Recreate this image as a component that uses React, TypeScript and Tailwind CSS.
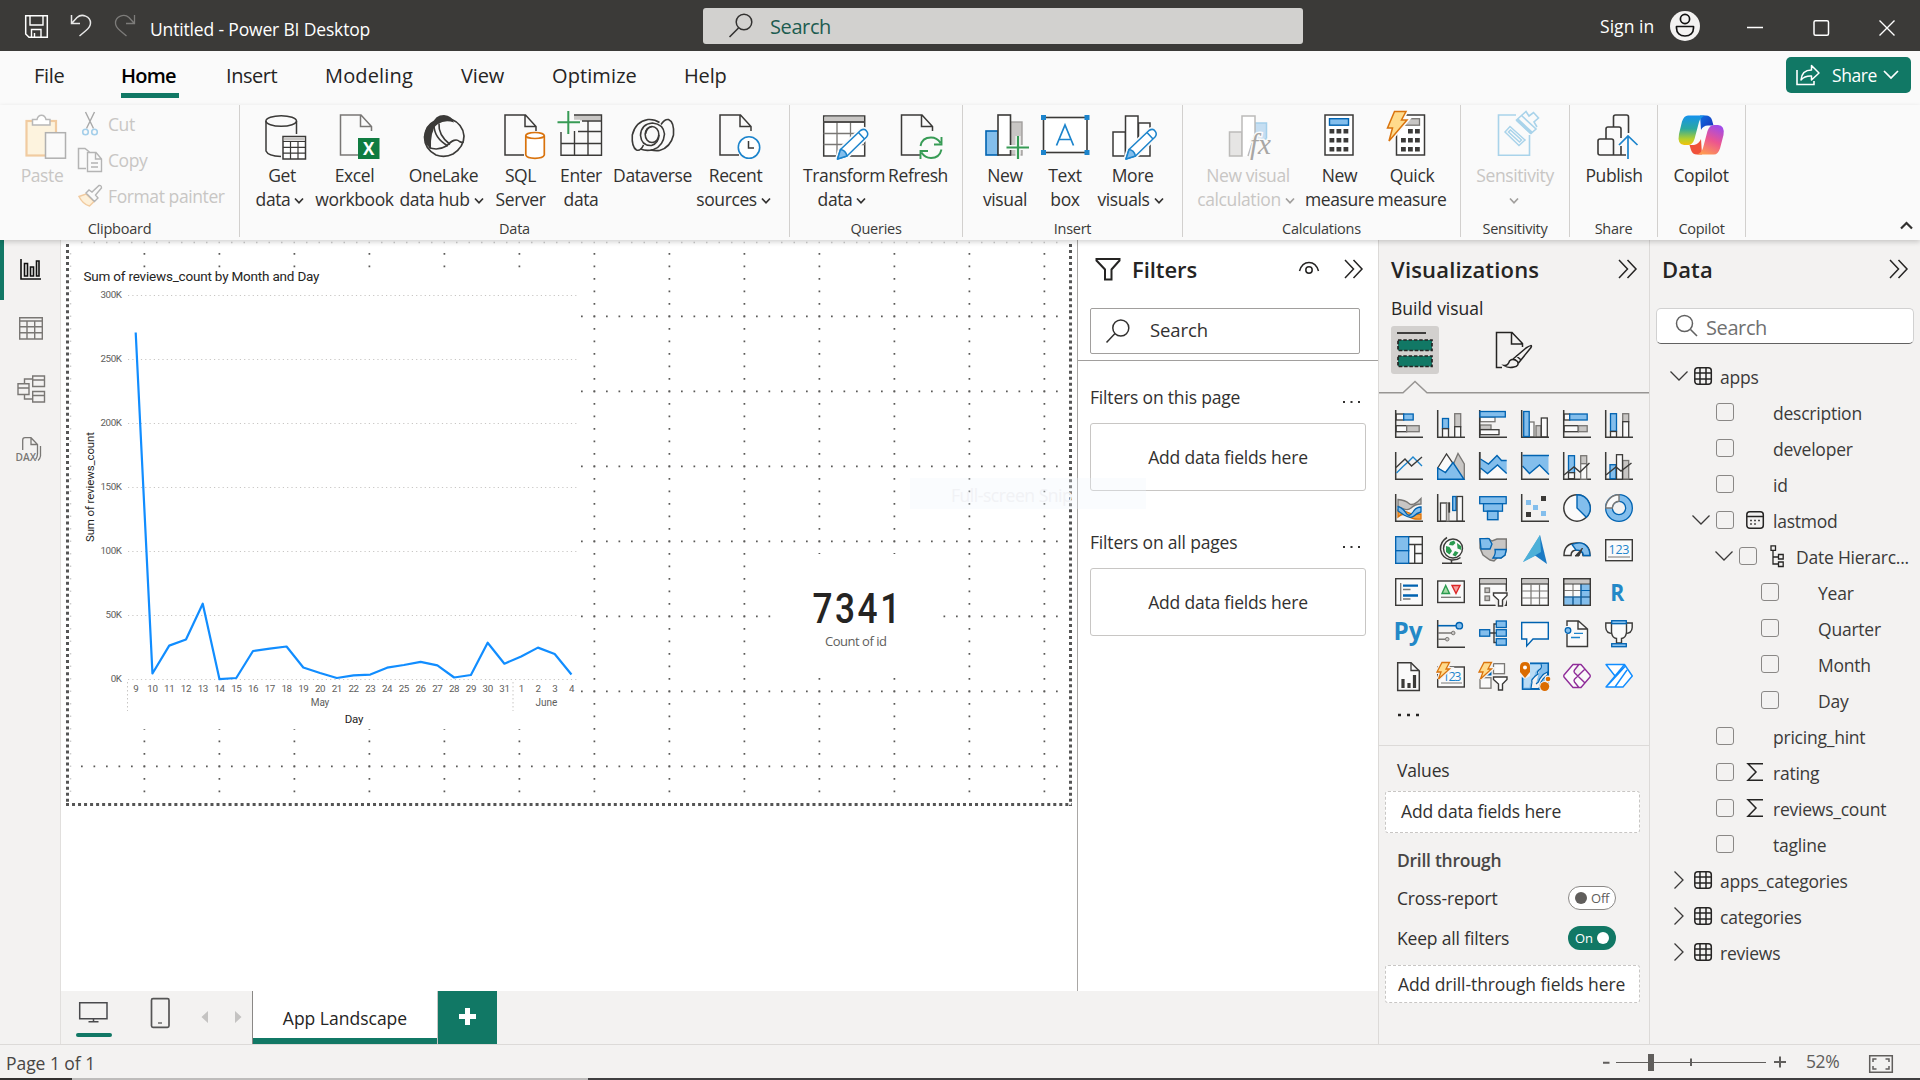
import type { ReactNode } from 'react';

const K = '#3b3a38';
const B = '#0063b1';
const L = '#83beec';
const G = '#797774';
const S = '#c8c6c4';
const W = '#fafafa';
const GREEN = '#117865';

type BoxProps = { vb: string; w: number; h: number; children: ReactNode; className?: string };

function Ic({ vb, w, h, children, className }: BoxProps) {
  return (
    <svg viewBox={vb} width={w} height={h} fill="none" className={`block shrink-0 ${className ?? ''}`}>
      {children}
    </svg>
  );
}

function Rc({ d, f, s = K, sw = 1.3 }: { d: [number, number, number, number]; f: string; s?: string; sw?: number }) {
  return <rect x={d[0]} y={d[1]} width={d[2]} height={d[3]} fill={f} stroke={s} strokeWidth={sw} />;
}

/* ---------- Title bar ---------- */

function TitleBar() {
  return (
    <header className="flex h-[51px] shrink-0 items-center bg-[#3b3a38] text-white">
      <div className="flex w-[703px] items-center pl-[24px]">
        <Ic vb="24 14 25 25" w={25} h={25} className="mt-[2px]">
          <path d="M25.7 15.7H47.3V37.3H29L25.7 34Z" stroke="#fff" strokeWidth="1.5" />
          <path d="M30 15.5V25H43V15.5M31.500 37.500V29.500H41V37.500M34.500 37V33" stroke="#fff" strokeWidth="1.400" />
        </Ic>
        <Ic vb="70 14 22 25" w={22} h={25} className="ml-[21px]">
          <path d="M71.500 16V24.500H80M72 24L77 18.500C82 14 90.500 17.500 90.500 24C90.500 27 89 29 86 31.500L79.500 37" stroke="#e8e8e8" strokeWidth="1.500" />
        </Ic>
        <Ic vb="114 14 22 25" w={22} h={25} className="ml-[22px]">
          <path d="M134.500 16V24.500H126M134 24L129 18.500C124 14 115.500 17.500 115.500 24C115.500 27 117 29 120 31.500L126.500 37" stroke="#7d7c7a" strokeWidth="1.300" />
        </Ic>
        <span className="ml-[14px] mt-[6px] text-[17.5px] leading-[24px] tracking-[-0.16px]">Untitled - Power BI Desktop</span>
      </div>
      <div className="flex h-[36px] w-[600px] items-center rounded-[3px] bg-[#d2d1cf]">
        <Ic vb="728 13 26 26" w={26} h={26} className="ml-[25px]">
          <circle cx="744" cy="22" r="7.800" stroke="#323130" strokeWidth="1.500" />
          <path d="M738.500 28L729.500 37" stroke="#323130" strokeWidth="1.600" />
        </Ic>
        <span className="ml-[16px] mt-[3px] text-[20px] leading-[26px] tracking-[-0.4px] text-[#1d5c50]">Search</span>
      </div>
      <span className="ml-[297px] w-[60px] text-[17.5px] leading-[24px] tracking-[0.05px]">Sign in</span>
      <Ic vb="1670 11 30 30" w={30} h={30} className="ml-[10px]">
        <circle cx="1685" cy="26" r="15" fill="#f3f2f1" />
        <circle cx="1685" cy="19" r="4.600" stroke="#111" strokeWidth="1.700" />
        <path d="M1676.500 26.500H1693.500V28C1693.500 33 1690 36 1685 36C1680 36 1676.500 33 1676.500 28Z" stroke="#111" strokeWidth="1.700" strokeLinejoin="round" />
      </Ic>
      <Ic vb="1740 16 160 24" w={160} h={24} className="ml-[40px] mt-[5px]">
        <path d="M1747 27.500H1763" stroke="#fff" strokeWidth="1.500" />
        <rect x="1814" y="20.700" width="14.500" height="14.500" rx="1.500" stroke="#fff" strokeWidth="1.500" />
        <path d="M1879.500 20.500L1894.500 35.500M1894.500 20.500L1879.500 35.500" stroke="#fff" strokeWidth="1.400" />
      </Ic>
    </header>
  );
}

/* ---------- Ribbon tabs ---------- */

function RibbonTabs() {
  const tab = 'text-[20px] leading-[26px] whitespace-nowrap';
  return (
    <nav className="flex h-[54px] shrink-0 items-start bg-[#fafafa] text-[#252423]">
      <div className="flex w-[1786px] pt-[12px]">
        <span className={`${tab} ml-[34px] w-[87px] tracking-[-0.3px]`}>File</span>
        <div className="mr-[47px] w-[58px]">
          <span className={`${tab} block font-semibold tracking-[-0.75px] text-black`}>Home</span>
          <div className="mt-[4px] h-[5px] bg-[#117865]" />
        </div>
        <span className={`${tab} w-[99px] tracking-[-0.45px]`}>Insert</span>
        <span className={`${tab} w-[136px] tracking-[0.15px]`}>Modeling</span>
        <span className={`${tab} w-[91px] tracking-[-0.15px]`}>View</span>
        <span className={`${tab} w-[132px] tracking-[0.1px]`}>Optimize</span>
        <span className={`${tab} tracking-[-0.15px]`}>Help</span>
      </div>
      <button className="mt-[6px] flex h-[36px] w-[125px] items-center rounded-[5px] bg-[#117865] text-white">
        <Ic vb="1795 62 28 25" w={28} h={25} className="ml-[9px]">
          <path d="M1797 69V83.500H1814V80" stroke="#fff" strokeWidth="1.600" />
          <path d="M1801 79C1801.500 72.500 1805 69 1811.500 69V64.500L1819 72L1811.500 79V75C1807 74.800 1803.500 76 1801 79Z" stroke="#fff" strokeWidth="1.500" strokeLinejoin="round" />
        </Ic>
        <span className="ml-[9px] text-[17.5px] leading-[24px] tracking-[-0.4px]">Share</span>
        <Ic vb="0 0 16 10" w={16} h={10} className="ml-[6px]">
          <path d="M1 1L8 8L15 1" stroke="#fff" strokeWidth="1.700" />
        </Ic>
      </button>
    </nav>
  );
}

/* ---------- Ribbon ---------- */

function Chev({ c = '#323130', alone }: { c?: string; alone?: boolean }) {
  return (
    <svg width="10" height="8" viewBox="0 0 10 8" fill="none" className={`mb-[1px] inline-block ${alone ? 'mr-[2px]' : 'ml-[4px] mr-[4px]'}`}>
      <path d="M1 1.500L5 5.800L9 1.500" stroke={c} strokeWidth="1.700" />
    </svg>
  );
}

type CmdProps = { w: string; l1: string; l2?: string; chev?: boolean; dim?: boolean; x: number; children: ReactNode };

function Cmd({ w, l1, l2, chev, dim, x, children }: CmdProps) {
  return (
    <div className={`flex flex-col items-center ${w} ${dim ? 'text-[#c8c6c4]' : 'text-[#323130]'}`}>
      <Ic vb={`${x - 26} 110 52 52`} w={52} h={52} className="mb-[1px]">
        {children}
      </Ic>
      <span className="whitespace-nowrap text-[17.5px] leading-[24px] tracking-[-0.38px]">{l1}</span>
      {(l2 || chev) && (
        <span className="whitespace-nowrap text-[17.5px] leading-[24px] tracking-[-0.38px]">
          {l2}
          {chev && <Chev c={dim ? '#a19f9d' : '#323130'} alone={!l2} />}
        </span>
      )}
    </div>
  );
}

function GroupLabel({ label }: { label: string }) {
  return <div className="mt-[3px] shrink-0 text-center text-[14.5px] leading-[17px] tracking-[-0.25px] text-[#3b3a39]">{label}</div>;
}

function Group({ w, label, children }: { w: string; label: string; children: ReactNode }) {
  return (
    <section className={`flex h-[132px] flex-col border-r border-[#d2d0ce] ${w}`}>
      <div className="flex h-[112px] shrink-0 justify-start pt-[5px]">{children}</div>
      <GroupLabel label={label} />
    </section>
  );
}

function Doc({ x, s = K }: { x: number; s?: string }) {
  return (
    <path d={`M${x + 19} 155H${x}V115H${x + 20.500}L${x + 31} 126.500V131M${x + 20} 115V126.500H${x + 31}`} stroke={s} strokeWidth="1.500" />
  );
}

function Pencil({ x }: { x: number }) {
  return (
    <g strokeLinejoin="round">
      <path d={`M${x} 159L${x + 3} 149.500L${x + 23} 130.500Q${x + 27} 128 ${x + 29} 131Q${x + 31.500} 134 ${x + 29} 137L${x + 9.500} 156Z`} fill="#fff" stroke="#fafafa" strokeWidth="5" />
      <path d={`M${x} 159L${x + 3} 149.500L${x + 23} 130.500Q${x + 27} 128 ${x + 29} 131Q${x + 31.500} 134 ${x + 29} 137L${x + 9.500} 156Z`} fill="#fff" stroke="#1c84cc" strokeWidth="1.500" />
      <path d={`M${x} 159L${x + 3} 149.500Q${x + 8} 150 ${x + 9.500} 156ZM${x + 21} 132.500L${x + 27} 139`} fill="#83beec" stroke="#1c84cc" strokeWidth="1.500" />
    </g>
  );
}

function CalcKeys({ x, skip }: { x: number; skip?: boolean }) {
  return (
    <g fill={K}>
      {[129, 138, 147].map((y) => [0, 7, 14].map((dx) => (skip && y === 129 && dx === 0 ? null : <rect key={`${y}${dx}`} x={x + dx} y={y} width="4.800" height="4.500" />)))}
    </g>
  );
}

function Ribbon() {
  return (
    <div className="relative z-10 flex h-[135px] shrink-0 bg-[#fafafa] shadow-[0_2px_5px_rgba(0,0,0,0.18)]">
      {/* Clipboard */}
      <section className="flex h-[132px] w-[240px] flex-col border-r border-[#d2d0ce]">
        <div className="flex h-[112px] shrink-0">
          <div className="ml-[19px] mt-[5px] flex w-[46px] flex-col items-center text-[#c8c6c4]">
            <Ic vb="16 110 52 52" w={52} h={52} className="mb-[1px]">
              <rect x="26.500" y="121" width="29.500" height="34.500" fill="#fdf3de" stroke="#f1cba0" strokeWidth="2.200" />
              <path d="M32.500 125V119.500H37Q38 115.300 41.500 115.300T46 119.500H50V125Z" fill="#fff" stroke="#b8b8b8" strokeWidth="1.500" />
              <rect x="45.500" y="132.700" width="20" height="25.500" fill="#fafafa" stroke="#b0b0b0" strokeWidth="1.500" />
            </Ic>
            <span className="text-[17.5px] leading-[24px] tracking-[-0.4px]">Paste</span>
          </div>
          <div className="ml-[12px] flex flex-col text-[17.5px] leading-[24px] tracking-[-0.4px] text-[#c8c6c4]">
            <div className="mt-[6px] flex h-[26px] items-center gap-[5px]">
              <Ic vb="77 111 26 26" w={26} h={26}>
                <path d="M85.500 112L93.500 128.500M94.500 112L86.500 128.500" stroke="#a8a8a8" strokeWidth="1.400" />
                <circle cx="85.500" cy="132" r="2.800" stroke="#a5cfea" strokeWidth="1.600" />
                <circle cx="94.500" cy="132" r="2.800" stroke="#a5cfea" strokeWidth="1.600" />
              </Ic>
              <span className="-mt-[1px]">Cut</span>
            </div>
            <div className="mt-[10px] flex h-[26px] items-center gap-[5px]">
              <Ic vb="77 146 26 26" w={26} h={26}>
                <path d="M86 167.500H78.500V147.500H85L89.500 151" stroke="#b4b4b4" strokeWidth="1.500" />
                <path d="M87.500 151.500H96L101.500 158V170.500H87.500ZM95.500 151.500V158H101.500M91 162H98M91 166H98" stroke="#b4b4b4" strokeWidth="1.400" />
              </Ic>
              <span className="-mt-[1px]">Copy</span>
            </div>
            <div className="mt-[10px] flex h-[26px] items-center gap-[5px]">
              <Ic vb="77 182 26 26" w={26} h={26}>
                <path d="M79 195.500L86 193L94 200.500L89.500 205Q83 203.500 79 195.500Z" fill="#fdf0d9" stroke="#f1cba0" strokeWidth="1.500" />
                <path d="M86 192L89 189L92 191L99 184.500Q101.500 184 101.500 187L95.500 194L98 197L94.500 200.500Z" fill="#fafafa" stroke="#b4b4b4" strokeWidth="1.400" />
              </Ic>
              <span className="-mt-[1px]">Format painter</span>
            </div>
          </div>
        </div>
        <GroupLabel label="Clipboard" />
      </section>

      <Group w="w-[550px]" label="Data">
        <Cmd w="ml-[16px] w-[52px]" l1="Get" l2="data" chev x={282}>
          <path d="M266 121V151Q268 156 281 156.500M296.500 121V134" stroke={K} strokeWidth="1.500" />
          <ellipse cx="281.200" cy="121" rx="15.300" ry="5.300" stroke={K} strokeWidth="1.500" />
          <rect x="283" y="136.500" width="22.500" height="22.500" fill="#fff" stroke={K} strokeWidth="1.500" />
          <path d="M283.700 139H304.700" stroke={S} strokeWidth="3" />
          <path d="M283 141.500H305.500M283 147.300H305.500M283 153.200H305.500M290.500 141.500V159M298 141.500V159" stroke={K} strokeWidth="1.200" />
        </Cmd>
        <Cmd w="ml-[7px] w-[79px]" l1="Excel" l2="workbook" x={355}>
          <Doc x={340.500} s="#797775" />
          <rect x="358" y="138" width="21.500" height="21" fill="#107c41" />
          <text x="368.700" y="154.800" textAnchor="middle" fontSize="17" fontWeight="700" fill="#fff" fontFamily="Open Sans">X</text>
        </Cmd>
        <Cmd w="ml-[6px] w-[87px]" l1="OneLake" l2="data hub" chev x={444}>
          <path d="M434 122Q426 127 424.500 137Q424.500 149 436 155Q445 158 453 154Q464 147 464 136Q463 124 451 119" stroke={K} strokeWidth="1.700" />
          <path d="M434 120.500Q435 127 432 134Q430.500 141 431 149Q424 144 424 136Q425 125 434 120.500Z" fill={K} />
          <path d="M432.500 124Q435 115 444 115Q452 115.500 454 122.500Q445 119.500 438 124Q435 126 433 129Z" fill={K} />
          <path d="M434 125Q434 138 448 146M439 123.500Q438 135 450 144.500M428.500 147.500Q438 151 446.500 146Q455 137 459.500 141.500Q462 143 463.500 142" stroke={K} strokeWidth="1.600" />
        </Cmd>
        <Cmd w="ml-[9px] w-[49px]" l1="SQL" l2="Server" x={521}>
          <Doc x={505} />
          <path d="M525.800 135.500V155Q527 158.300 535 158.300T544.300 155V135.500" fill="#fff" stroke="#d9730d" strokeWidth="1.700" />
          <ellipse cx="535" cy="135.500" rx="9.200" ry="3" fill="#fff" stroke="#d9730d" strokeWidth="1.700" />
        </Cmd>
        <Cmd w="ml-[16px] w-[40px]" l1="Enter" l2="data" x={581}>
          <path d="M574 118H601.500" stroke={S} strokeWidth="5" />
          <path d="M574 115H601.500V155.200H561V132M601.500 121H582M574.500 131V155M588 121V155M578 131.500H601M561 143.500H601" stroke={K} strokeWidth="1.400" />
          <path d="M568.300 111V134M557.500 122.300H580" stroke="#fafafa" strokeWidth="5" />
          <path d="M568.300 111V134M557.500 122.300H580" stroke="#379b55" strokeWidth="2" />
        </Cmd>
        <Cmd w="ml-[13px] w-[77px]" l1="Dataverse" x={652.5}>
          <g stroke={K} strokeWidth="1.600">
            <ellipse cx="651.500" cy="134.500" rx="6.800" ry="8" />
            <path d="M658.500 135Q658 143.500 651 145.500Q641 146 640 135.500Q640.500 124 652 123Q663 124 664 134Q663 146 653 149.500Q646 151.500 640 149" />
            <path d="M645 134Q646 127.500 651.500 126.500" />
            <path d="M659 122.500Q654 119 647.500 119.500Q635 121.500 631.800 135Q631 147 636 150Q640 151.500 643 145" />
            <path d="M660.500 124.500Q664 119 668 119.500Q674 122 673 135Q670 147.500 659 150.500Q655 151 650 150" />
          </g>
        </Cmd>
        <Cmd w="ml-[8px] w-[73px]" l1="Recent" l2="sources" chev x={736}>
          <Doc x={720} />
          <circle cx="749" cy="147.500" r="10.700" fill="#fff" stroke="#1c84cc" strokeWidth="1.600" />
          <path d="M748.500 141V148H754" stroke={K} strokeWidth="1.500" />
        </Cmd>
      </Group>

      <Group w="w-[173px]" label="Queries">
        <Cmd w="ml-[15px] w-[78px]" l1="Transform" l2="data" chev x={844}>
          <rect x="823.700" y="116" width="41" height="40" fill="#fff" stroke={K} strokeWidth="1.500" />
          <rect x="824.500" y="116.700" width="39.500" height="5" fill={S} />
          <path d="M823.500 122H865M837 122V156M850.500 122V156M823.500 133.500H865M823.500 144.500H865" stroke={G} strokeWidth="1.300" />
          <path d="M823.700 122H865" stroke={K} strokeWidth="1.300" />
          <Pencil x={837.5} />
        </Cmd>
        <Cmd w="ml-[6px] w-[58px]" l1="Refresh" x={918}>
          <Doc x={901.500} />
          <circle cx="931" cy="147.500" r="12.500" fill="#fafafa" />
          <path d="M920.500 146Q922 137.500 931 137.500Q937 137.500 940.500 143M941.500 137V144.500H934M941.500 149.500Q939.500 158 931 158Q925 158 921.500 152.500M920.500 159V151H928" stroke="#379b55" strokeWidth="1.900" />
        </Cmd>
      </Group>

      <Group w="w-[220px]" label="Insert">
        <Cmd w="ml-[20px] w-[44px]" l1="New" l2="visual" x={1005}>
          <Rc d={[986, 131, 12, 24]} f={L} s={B} sw={1.6} />
          <Rc d={[1010.5, 122, 11.5, 33]} f={S} s="#a19f9d" sw={1.4} />
          <Rc d={[998, 115, 12.5, 40]} f="#fff" sw={1.6} />
          <path d="M1018 136V159M1006.500 147.500H1029" stroke="#fafafa" strokeWidth="5" />
          <path d="M1018 136V159M1006.500 147.500H1029" stroke="#379b55" strokeWidth="2.200" />
        </Cmd>
        <Cmd w="ml-[15px] w-[46px]" l1="Text" l2="box" x={1065}>
          <Rc d={[1043.5, 117.5, 43.5, 35]} f="#fff" sw={1.6} />
          {[1041, 1084.5].map((x) => [115, 150].map((y) => <rect key={`${x}${y}`} x={x} y={y} width="5" height="5" fill="#1c84cc" />))}
          <path d="M1056.500 145.500L1065 125L1073.500 145.500M1059 139.500H1071" stroke="#1c84cc" strokeWidth="1.700" />
        </Cmd>
        <Cmd w="ml-[10px] w-[69px]" l1="More" l2="visuals" chev x={1132.5}>
          <Rc d={[1112.5, 132, 12.5, 24]} f="#fff" sw={1.5} />
          <Rc d={[1138, 123, 11.500, 33]} f="#fff" sw={1.5} />
          <Rc d={[1125, 116, 12.500, 40]} f="#fff" sw={1.5} />
          <Pencil x={1125.5} />
        </Cmd>
      </Group>

      <Group w="w-[278px]" label="Calculations">
        <Cmd w="ml-[13px] w-[104px]" l1="New visual" l2="calculation" chev dim x={1248}>
          <Rc d={[1229.5, 132, 12.5, 24]} f="#e6e5e4" s="#bcbbb9" sw={1.5} />
          <Rc d={[1255, 123, 11.5, 16]} f="#c5def2" s="#a5cfea" sw={1.5} />
          <path d="M1242 156V116H1255V134L1248 156" fill="#fff" stroke="#bcbbb9" strokeWidth="1.500" />
          <text x="1250" y="154" fontSize="29" fontStyle="italic" fill="#a8a6a4" stroke="#fafafa" strokeWidth="3" paintOrder="stroke" fontFamily="Liberation Serif">fx</text>
        </Cmd>
        <Cmd w="ml-[6px] w-[67px]" l1="New" l2="measure" x={1339.5}>
          <Rc d={[1324.5, 115, 28, 40]} f="#fff" sw={1.5} />
          <Rc d={[1329, 118.7, 19, 6.500]} f={L} s={B} sw={1.4} />
          <CalcKeys x={1329} />
        </Cmd>
        <Cmd w="ml-[6px] w-[66px]" l1="Quick" l2="measure" x={1413}>
          <Rc d={[1397.5, 115, 28, 40]} f="#fff" sw={1.500} />
          <Rc d={[1402, 118.7, 18.500, 6.500]} f={S} s={G} sw={1.300} />
          <CalcKeys x={1402} skip />
          <path d="M1395.500 111.500H1407L1402.500 120H1408L1390 141L1393.500 128H1388.500Z" fill="#ffd77a" stroke="#fafafa" strokeWidth="4.500" />
          <path d="M1395.500 111.500H1407L1402.500 120H1408L1390 141L1393.500 128H1388.500Z" fill="#ffdb8c" stroke="#d9730d" strokeWidth="1.500" />
        </Cmd>
      </Group>

      <Group w="w-[109px]" label="Sensitivity">
        <Cmd w="ml-[14px] w-[80px]" l1="Sensitivity" chev dim x={1515}>
          <path d="M1516 115H1498.500V155.300H1529.500V135" stroke="#a9d3ea" strokeWidth="1.600" />
          <path d="M1505 132L1510 126.500L1525 140L1519 145.500ZM1508.500 132L1510.500 130L1521.500 140L1519.500 142Z" stroke="#a9d3ea" strokeWidth="1.500" />
          <path d="M1516.500 120L1521.500 115.500L1536 129L1531 133.500ZM1521.500 115.500L1526 111.500L1529 116L1533.500 112.500L1538.500 118L1534 122L1537 127" stroke="#a9d3ea" strokeWidth="1.600" />
          <path d="M1517 119.500L1531.500 133" stroke="#a9d3ea" strokeWidth="3.500" />
        </Cmd>
      </Group>

      <Group w="w-[88px]" label="Share">
        <Cmd w="ml-[16px] w-[56px]" l1="Publish" x={1614}>
          <path d="M1626 155H1600Q1598 155 1598 153V141Q1598 139 1600 139H1611.500Q1613.500 139 1613.500 141V155M1606 139V129Q1606 127 1608 127H1619Q1621 127 1621 129V138M1613.500 127V117Q1613.500 115 1615.500 115H1626.500Q1628.500 115 1628.500 117V133M1621 146V155" stroke={K} strokeWidth="1.600" />
          <path d="M1628 159V136M1619 145L1628 136L1637.500 145" stroke="#1c84cc" strokeWidth="1.700" />
        </Cmd>
      </Group>

      <Group w="w-[88px]" label="Copilot">
        <Cmd w="ml-[14px] w-[58px]" l1="Copilot" x={1701}>
          <defs>
            <linearGradient id="cpA" x1="0" y1="0" x2="0" y2="1">
              <stop offset="0" stopColor="#1592ee" />
              <stop offset="0.450" stopColor="#2aa9a0" />
              <stop offset="0.800" stopColor="#b5cf2c" />
              <stop offset="1" stopColor="#f2c20c" />
            </linearGradient>
            <linearGradient id="cpB" x1="0.700" y1="0" x2="0.300" y2="1">
              <stop offset="0" stopColor="#a14be8" />
              <stop offset="0.500" stopColor="#ec5590" />
              <stop offset="1" stopColor="#ff9a52" />
            </linearGradient>
            <linearGradient id="cpC" x1="0" y1="0" x2="1" y2="1">
              <stop offset="0" stopColor="#0f6fe0" />
              <stop offset="1" stopColor="#1a2fb8" />
            </linearGradient>
          </defs>
          <path d="M1700 115.500H1706Q1710.500 115.500 1712 120L1713.500 125.500H1708Q1703 125.500 1701 130Z" fill="url(#cpC)" />
          <path d="M1702 154.500H1697Q1692.500 154.500 1691 150L1689.500 145H1694Q1699 144 1701 139Z" fill="#f0513a" />
          <path d="M1688 115.500H1705Q1700.500 117 1699 122L1694.500 139Q1692.500 145 1688 145H1684Q1677 144.500 1679 134L1682 121.500Q1684 115.500 1688 115.500Z" fill="url(#cpA)" />
          <path d="M1714 154.500H1697Q1701.500 153 1703 148L1707.500 131Q1709.500 125 1714 125H1718Q1725 125.500 1723.500 135L1720 148.500Q1718 154.500 1714 154.500Z" fill="url(#cpB)" />
        </Cmd>
      </Group>
      <div className="flex flex-1 items-end justify-end pb-[10px] pr-[7px]">
        <Ic vb="0 0 13 9" w={13} h={9}>
          <path d="M1 7.500L6.500 2L12 7.500" stroke="#323130" strokeWidth="2.200" />
        </Ic>
      </div>
    </div>
  );
}

/* ---------- Left rail ---------- */

function LeftRail() {
  return (
    <aside className="flex w-[61px] shrink-0 flex-col border-r border-[#e1dfdd] bg-[#f3f2f1]">
      <div className="flex h-[60px] items-center border-l-4 border-[#117865] pl-[15px]">
        <Ic vb="19 258 24 24" w={24} h={24}>
          <path d="M21 259V279H41" stroke="#111" strokeWidth="1.600" />
          <path d="M24.500 263.500H27.500V276H24.500ZM30.500 267H33.500V276H30.500ZM36.500 261H39V276H36.500Z" stroke="#111" strokeWidth="1.600" />
        </Ic>
      </div>
      <div className="flex h-[60px] items-center pl-[18px]">
        <Ic vb="18 316 26 26" w={26} h={26} className="-mt-[3px]">
          <path d="M19.700 317.700H42.300V339H19.700ZM19.700 321H42.300M19.700 326.800H42.300M19.700 332.800H42.300M27 321V339M34.700 321V339" stroke={G} strokeWidth="1.400" />
        </Ic>
      </div>
      <div className="flex h-[60px] items-center pl-[16px]">
        <Ic vb="16 374 30 30" w={30} h={30} className="-mt-[2px]">
          <path d="M32.700 376H44.500V386.500H32.700ZM32.700 380H44.500M32.700 391.500H44.500V402H32.700ZM32.700 395.500H44.500M18 383.700H29V394.500H18ZM18 388H29M24.500 383V379H32M24.500 395V399H32" stroke={G} strokeWidth="1.400" />
        </Ic>
      </div>
      <div className="flex h-[60px] items-center pl-[15px]">
        <Ic vb="15 436 28 28" w={28} h={28}>
          <path d="M22.700 450V440Q22.700 437.700 25 437.700H31L37.500 444.500V454Q37.500 457 35.500 459.500M31 438V444.500H37.500M40.500 446V456Q40 459 38 460.500" stroke={G} strokeWidth="1.300" />
          <text x="15.500" y="461" fontSize="10.500" fontWeight="600" fill={G} textLength="20.500" lengthAdjust="spacingAndGlyphs" fontFamily="Open Sans">DAX</text>
        </Ic>
      </div>
    </aside>
  );
}

/* ---------- Report canvas ---------- */

const days = ['9', '10', '11', '12', '13', '14', '15', '16', '17', '18', '19', '20', '21', '22', '23', '24', '25', '26', '27', '28', '29', '30', '31', '1', '2', '3', '4'];
const ys = [332.5, 673.5, 645.6, 639.5, 603.7, 679.2, 678, 651, 648.7, 646.5, 667.5, 673, 678, 675.4, 674.6, 667.7, 665, 661.8, 665.3, 677.5, 675, 642.7, 663.7, 656.5, 647.6, 654, 674.5];
const ticks = ['300K', '250K', '200K', '150K', '100K', '50K', '0K'];
const px = (i: number) => 135.700 + i * 16.76;

function Canvas() {
  const cols = Array.from({ length: 13 }, (_, i) => 144.400 + i * 75);
  const lines = Array.from({ length: 7 }, (_, i) => 316.300 + i * 75);
  const din = 'Roboto, sans-serif';
  return (
    <svg viewBox="61 240 1016 751" width="1016" height="751" className="block" fill="none">
      <g stroke="#5a5957" strokeWidth="1.700" strokeDasharray="1.700 10.800">
        {cols.map((x) => (
          <path key={x} d={`M${x} 253V793`} />
        ))}
        {lines.map((y) => (
          <path key={y} d={`M81 ${y}H1058`} />
        ))}
      </g>
      <path d="M81 242.500H1058M70.500 253V793" stroke="#ccc" strokeWidth="1.500" strokeDasharray="1.500 11" />
      <path d="M67.500 244V806M1070.500 244V806" stroke="#555" strokeWidth="3" strokeDasharray="3 3.030" />
      <path d="M66 804.500H1072" stroke="#555" strokeWidth="3" strokeDasharray="3 3.020" />
      <rect x="72" y="270" width="507" height="459" fill="#fff" />
      <rect x="773" y="554" width="168" height="121" fill="#fff" />

      <text x="83.500" y="281" fontSize="13.500" fontFamily={din} fill="#252423" textLength="236">Sum of reviews_count by Month and Day</text>
      {ticks.map((t, i) => (
        <g key={t}>
          <path d={`M128 ${295.500 + i * 64}H577`} stroke="#c8c6c4" strokeDasharray="1.200 3.100" />
          <text x="121.500" y={298.200 + i * 64} fontSize="9.800" textAnchor="end" fontFamily={din} fill="#605e5c" letterSpacing="-0.400">{t}</text>
        </g>
      ))}
      {days.map((t, i) => (
        <text key={i} x={px(i)} y="692" fontSize="9.800" textAnchor="middle" fontFamily={din} fill="#605e5c" letterSpacing="-0.400">{t}</text>
      ))}
      <path d="M127.500 682V711M513 682V711" stroke="#c8c6c4" strokeDasharray="1.500 2.500" />
      <text x="320" y="705.500" fontSize="10" textAnchor="middle" fontFamily={din} fill="#605e5c" letterSpacing="-0.150">May</text>
      <text x="546.500" y="705.500" fontSize="10" textAnchor="middle" fontFamily={din} fill="#605e5c">June</text>
      <text x="354" y="723" fontSize="11.500" textAnchor="middle" fontFamily={din} fill="#252423" letterSpacing="-0.300">Day</text>
      <text transform="translate(94 542) rotate(-90)" fontSize="11.500" fontFamily={din} fill="#252423" textLength="110">Sum of reviews_count</text>
      <polyline points={ys.map((y, i) => `${px(i)},${y}`).join(' ')} stroke="#118dff" strokeWidth="2.200" strokeLinejoin="round" />

      <text transform="translate(812.500 623) scale(0.840 1)" fontSize="42" fontWeight="500" fontFamily={din} fill="#252423" letterSpacing="3">7341</text>
      <text x="856" y="645.500" fontSize="13" textAnchor="middle" fontFamily="Open Sans" fill="#605e5c" textLength="62">Count of id</text>
    </svg>
  );
}

function PageTabs() {
  return (
    <div className="flex h-[53px] shrink-0 bg-[#f3f2f1]">
      <Ic vb="61 991 191 53" w={191} h={53}>
        <path d="M79.700 1002.700H107V1018.700H79.700ZM93.500 1019V1021.500M88.500 1021.700H98.500" stroke="#4a4a4d" strokeWidth="1.500" />
        <rect x="76" y="1033" width="36" height="4" rx="2" fill={GREEN} />
        <rect x="151.500" y="998.700" width="17.500" height="28.600" rx="1.500" stroke="#555" strokeWidth="1.700" />
        <path d="M158 1023H162" stroke="#555" strokeWidth="1.300" />
        <path d="M208 1011V1023L201.500 1017ZM235 1011V1023L241.500 1017Z" fill="#c4c3c2" />
      </Ic>
      <div className="flex w-[186px] flex-col border-x border-l-[#8a8886] border-r-[#c8c6c4] bg-white">
        <div className="flex h-[47px] items-center justify-center pt-[7px] text-[17.5px] font-medium leading-[24px] tracking-[0px] text-[#252423]">App Landscape</div>
        <div className="h-[6px] bg-[#117865]" />
      </div>
      <div className="flex w-[59px] items-center justify-center bg-[#117865] pb-[3px]">
        <Ic vb="0 0 17 17" w={17} h={17}>
          <path d="M8.500 0V17M0 8.500H17" stroke="#fff" strokeWidth="5" />
        </Ic>
      </div>
    </div>
  );
}

/* ---------- Filters ---------- */

function DoubleChevron({ className }: { className?: string }) {
  return (
    <Ic vb="0 0 20 20" w={20} h={20} className={className}>
      <path d="M1 1L9.500 10L1 19M9.500 1L18 10L9.500 19" stroke="#252423" strokeWidth="1.500" />
    </Ic>
  );
}

function FilterBlock({ title }: { title: string }) {
  return (
    <div className="h-[145px]">
      <div className="flex h-[36px] items-center justify-between pl-[12px] pr-[18px]">
        <span className="-mt-[2px] text-[17.5px] leading-[24px] tracking-[-0.18px] text-[#323130]">{title}</span>
        <Ic vb="0 0 17 4" w={17} h={4} className="mt-[8px]">
          <path d="M0 2H2M7.500 2H9.500M15 2H17" stroke="#323130" strokeWidth="2" />
        </Ic>
      </div>
      <div className="ml-[12px] mt-[7px] flex h-[68px] w-[276px] items-center justify-center rounded-[3px] border border-[#c8c6c4] text-[17.500px] leading-[24px] tracking-[-0.2px] text-[#323130]">Add data fields here</div>
    </div>
  );
}

function Filters() {
  return (
    <section className="h-[751px] w-[301px] shrink-0 border-l border-[#a9a7a5] bg-white">
      <div className="flex h-[68px] items-center">
        <Ic vb="1095 256 26 26" w={26} h={26} className="-mt-[11px] ml-[17px]">
          <path d="M1096.500 259H1119.500V260.500L1111.500 269.500V279.500H1105V269.500L1096.500 260.500Z" stroke="#252423" strokeWidth="2" />
        </Ic>
        <span className="-mt-[11px] ml-[11px] w-[166px] text-[22px] font-semibold leading-[28px] tracking-[-0.05px] text-[#252423]">Filters</span>
        <Ic vb="1298 258 22 18" w={22} h={18} className="-mt-[14px]">
          <path d="M1299.500 271Q1302 262.500 1309 262.500T1318.500 271" stroke="#252423" strokeWidth="1.500" />
          <circle cx="1309" cy="270" r="3.200" stroke="#252423" strokeWidth="1.500" />
        </Ic>
        <DoubleChevron className="-mt-[10px] ml-[24px]" />
      </div>
      <div className="ml-[12px] flex h-[46px] w-[270px] items-center rounded-[2px] border border-[#a19f9d]">
        <Ic vb="1105 317 26 26" w={26} h={26} className="ml-[14px]">
          <circle cx="1120.800" cy="327" r="8" stroke="#323130" strokeWidth="1.500" />
          <path d="M1115 332.500L1106.500 341.500" stroke="#323130" strokeWidth="1.500" />
        </Ic>
        <span className="-mt-[3px] ml-[19px] text-[18.500px] leading-[24px] tracking-[-0.1px] text-[#323130]">Search</span>
      </div>
      <div className="mb-[19px] mt-[6px] h-px bg-[#a19f9d]" />
      <FilterBlock title="Filters on this page" />
      <FilterBlock title="Filters on all pages" />
    </section>
  );
}

/* ---------- Visualizations ---------- */

const axis = <path d="M.7 0V27.300H28" stroke={K} strokeWidth="1.500" />;
const bolt = (
  <>
    <path d="M5 .5H12.500L9 7H12.500L1.500 17L4 10H0Z" fill="#ffdb8c" stroke="#f3f2f1" strokeWidth="4" />
    <path d="M5 .5H12.500L9 7H12.500L1.500 17L4 10H0Z" fill="#ffdb8c" stroke="#d9730d" strokeWidth="1.300" />
  </>
);
const funnel = <path d="M14.500 15H28V17.500L23.500 22V28H19.500V22L14.500 17.500Z" fill="#fff" stroke={K} strokeWidth="1.400" />;

const visuals: ReactNode[] = [
  <>{axis}<Rc d={[1.2, 4, 7.500, 6]} f={W} /><Rc d={[8.700, 4, 9.500, 6]} f={L} s={B} /><Rc d={[1.200, 15.700, 10.500, 6]} f={W} /><Rc d={[11.700, 15.700, 12.500, 6]} f={S} s={G} /></>,
  <>{axis}<Rc d={[5.500, 8.500, 6, 10]} f={L} s={B} /><Rc d={[5.500, 18.700, 6, 8.500]} f={W} /><Rc d={[17.700, 3.700, 6, 13]} f={S} s={G} /><Rc d={[17.700, 16.700, 6, 10.500]} f={W} /></>,
  <><Rc d={[1, 7, 15, 4.700]} f={W} s={G} /><Rc d={[1, 15, 11, 4.500]} f={S} s={G} /><Rc d={[1, 19.700, 19, 5]} f={W} />{axis}<Rc d={[1, 1.500, 25.300, 5.500]} f={L} s={B} /></>,
  <><Rc d={[8, 12, 5, 15]} f={W} s={G} /><Rc d={[15, 15.700, 5, 11.500]} f={S} s={G} /><Rc d={[20.300, 8, 6, 19]} f={W} />{axis}<Rc d={[2.700, 1.500, 5.500, 25]} f={L} s={B} /></>,
  <>{axis}<Rc d={[1.200, 4, 5.500, 6]} f={W} /><Rc d={[6.700, 4, 17.500, 6]} f={L} s={B} /><Rc d={[1.200, 15.700, 14, 6]} f={W} /><Rc d={[15.500, 15.700, 8.700, 6]} f={S} s={G} /></>,
  <>{axis}<Rc d={[5.500, 3.700, 6, 17.500]} f={L} s={B} /><Rc d={[5.500, 21.500, 6, 5.500]} f={W} /><Rc d={[17.700, 3.700, 6, 8]} f={S} s={G} /><Rc d={[17.700, 11.700, 6, 15.500]} f={W} /></>,

  <>{axis}<path d="M1.500 21L8 14.500L13 10L18 5L27 14" stroke="#1c84cc" strokeWidth="1.400" /><path d="M1 15.500L10 7L16.500 14L27 5" stroke={K} strokeWidth="1.400" /></>,
  <><path d="M13 20L21 1.500L27.300 12V27H13Z" fill={S} stroke={G} strokeWidth="1.300" /><path d="M.7 16L9.500 2L17 13L8 21Z" fill={W} stroke={K} strokeWidth="1.300" /><path d="M.7 16L8.500 20.500L16 10.500L27 27.300H.7Z" fill={L} stroke={B} strokeWidth="1.400" /></>,
  <>{axis}<path d="M1.500 21L8 22L18 13L27.500 22V27H1.500Z" fill={W} /><path d="M1.500 7L9.500 12L18 3.500L22.500 8.500H27.700V21.500L18.500 13L8.500 21.500L1.500 16" fill={L} /><path d="M1.500 7L9.500 12L18 3.500L22.500 8.500H27.700M27.700 21.500L18.500 13L8.500 21.500L1.500 16" stroke={B} strokeWidth="1.400" />{axis}</>,
  <><path d="M1.500 3.500H27.500V22L18.500 13L8.500 21.500L1.500 14Z" fill={L} /><path d="M1.500 3.500H28M28 22.500L18.500 13L8.500 21.500L1.500 14" stroke={B} strokeWidth="1.400" />{axis}</>,
  <>{axis}<Rc d={[5.500, 3.700, 6, 17]} f={L} s={B} /><Rc d={[5.500, 20.700, 6, 6]} f={W} /><Rc d={[17.700, 3.700, 6, 8]} f={S} s={G} /><Rc d={[17.700, 11.700, 6, 15.500]} f={W} s={G} /><path d="M1 23L11 15L17 20L26.500 11" stroke={K} strokeWidth="1.400" /></>,
  <>{axis}<Rc d={[5, 12.700, 6, 14]} f={L} s={B} /><Rc d={[17.700, 8.500, 6, 18.500]} f={S} s={G} /><Rc d={[11.500, 2.700, 6, 24.500]} f={W} /><path d="M1 23L11 15L16 19L26.500 11" stroke={K} strokeWidth="1.400" /></>,

  <><path d="M3 16Q9 16 13 18.500T26 20V25Q18 26 13 22T3 23Z" fill="#f7a13f" stroke="#d9730d" strokeWidth="1.300" /><path d="M3 5.500Q10 6 14 9.500T26 4.500V10Q20 10 16 14T3 12Z" fill={S} stroke={G} strokeWidth="1.300" /><path d="M3 12.500Q8 14 11 19T18 18Q21 13 26 13V18Q22 19 19 22T9 21L3 17Z" fill={L} stroke={B} strokeWidth="1.300" />{axis}</>,
  <>{axis}<Rc d={[3.500, 9, 6, 18]} f={W} /><Rc d={[9.500, 9, 2.500, 18]} f={S} s={G} sw={1} /><Rc d={[12, 9, 0.500, 9]} f={K} /><Rc d={[15.700, 2.500, 3.300, 14]} f={L} s={B} /><Rc d={[20, 2.500, 5.500, 24.500]} f={W} /></>,
  <><Rc d={[.7, 2.700, 26.500, 7]} f={L} s={B} /><Rc d={[4.500, 9.700, 19, 7.500]} f={L} s={B} /><Rc d={[8.500, 17.200, 10.500, 8.500]} f={L} s={B} sw={1.400} /></>,
  <>{axis}<g><rect x="5" y="6" width="5" height="5" fill={L} /><rect x="12" y="11" width="5" height="5" fill={L} /><rect x="20" y="2" width="5" height="5" fill={K} /><rect x="20" y="17" width="5" height="5" fill={L} /><rect x="5" y="18" width="5" height="5" fill={K} /></g></>,
  <><circle cx="14" cy="14" r="13.200" fill={W} stroke={K} strokeWidth="1.500" /><path d="M14 .8A13.200 13.200 0 0 1 23.300 23.300L14 14Z" fill={L} stroke={B} strokeWidth="1.400" /></>,
  <><circle cx="14" cy="14" r="10" stroke={B} strokeWidth="8" /><circle cx="14" cy="14" r="10" stroke={L} strokeWidth="5.400" /><path d="M.8 14A13.200 13.200 0 0 1 14 .8V7.300A6.700 6.700 0 0 0 7.300 14Z" fill={W} stroke={G} strokeWidth="1.400" /></>,

  <><Rc d={[.7, .7, 26.600, 26.600]} f={W} sw={1.400} /><Rc d={[.7, .7, 13, 14]} f={L} s={B} /><Rc d={[.7, 14.700, 13, 12.600]} f={L} s={B} /><path d="M14 8.500H27M19.700 8.500V27M19.700 17.500H27" stroke={K} strokeWidth="1.400" /></>,
  <><circle cx="16" cy="12.500" r="9.500" fill={W} stroke={K} strokeWidth="1.400" /><path d="M13 6L17 4.500L18.500 7L16 9.500L12 9ZM9 10L12.500 11L15 15L12.500 18.500L9 16ZM20 7L24 10L24.500 14L20.500 12.500ZM18 15L21.500 16.500L18.500 20.500L15.500 19Z" fill="#2b9b50" /><path d="M10 1.500Q3 6 3.500 13.500Q5 22.500 14 24Q20 24.500 23.500 21.500M14.500 24.500V27.300M5 27.300H25" stroke={K} strokeWidth="1.500" /></>,
  <><path d="M1 3L9 2.500L13 5L18 3H27.300V14L26 19L22 22L19 21L15 25L11 24L4 19L1 12Z" fill={S} stroke={G} strokeWidth="1.400" /><path d="M1 2.700H10L13 8L11 13H2Z" fill={L} stroke={B} strokeWidth="1.300" /><path d="M16 13.500H27.300L26 19L22 22H14Q17 18 16 13.500Z" fill={L} stroke={B} strokeWidth="1.300" /></>,
  <><path d="M19 -1L2 26L16 19Z" fill="#57a9d9" /><path d="M19 -1L26 28L14 19.500Z" fill="#1b7ac4" /><path d="M19 -1L2 26L14 19.500L20 16Z" fill="#4db0d8" /></>,
  <><path d="M1 19.500Q1 7 14 7T27 19.500H20Q20 14 14 14T8 19.500Z" fill={W} stroke={K} strokeWidth="1.500" /><path d="M9 8.500Q20 4 25 12Q27 15 27 19.500H20.500Q20 14 13 14Z" fill={L} stroke={B} strokeWidth="1.300" /><path d="M12 20L19.500 12L16 20Z" fill={K} stroke={K} /></>,
  <><Rc d={[.7, 3.700, 26.600, 21]} f={W} sw={1.400} /><text x="14" y="18" textAnchor="middle" fontSize="12.500" fill="#1c84cc" textLength="21" fontFamily="Open Sans">123</text><path d="M3 21H25" stroke={G} /></>,

  <><Rc d={[.7, .7, 26.600, 26.600]} f={W} sw={1.400} /><path d="M5.700 5V23" stroke={G} strokeWidth="1.300" /><path d="M8 7.700H23M8 17.500H23" stroke={B} strokeWidth="2.300" /><path d="M8 11.500H15.500M8 21H15.500" stroke={G} strokeWidth="1.300" /></>,
  <><Rc d={[.7, 3, 26.600, 21.500]} f={W} sw={1.400} /><path d="M8.700 7.500L12.500 15.500H5Z" fill="#a5dba5" stroke="#2b9b50" strokeWidth="1.400" /><path d="M19 15.500L15 7.500H23Z" fill="#f5a0a0" stroke="#dc2626" strokeWidth="1.400" /><path d="M4 19.300H24" stroke={G} strokeWidth="1.300" /></>,
  <><Rc d={[.7, .7, 26.600, 26.600]} f={W} sw={1.400} /><rect x="1.400" y="1.400" width="25.200" height="4.400" fill={S} /><path d="M.7 6H27.300" stroke={K} strokeWidth="1.200" /><Rc d={[6, 10, 4.500, 4.500]} f={S} s={G} /><Rc d={[6, 18, 4.500, 4.500]} f={S} s={G} /><path d="M13 13.500H29V19L25 29H17Z" fill="#f3f2f1" />{funnel}</>,
  <><Rc d={[.7, .7, 26.600, 26.600]} f={W} sw={1.400} /><rect x="1.400" y="1.400" width="25.200" height="4.400" fill={S} /><path d="M.7 6H27.300" stroke={K} strokeWidth="1.200" /><path d="M10 6V27M18.500 6V27M1 13H27M1 20H27" stroke={G} strokeWidth="1.200" /></>,
  <><Rc d={[.7, .7, 26.600, 26.600]} f={W} sw={1.400} /><rect x="1.400" y="1.400" width="25.200" height="4.400" fill={S} /><path d="M18 6H27V27H1V19H18Z" fill={L} /><path d="M10 6V27M18 6V27M1 12.500H27M1 19H27" stroke={G} strokeWidth="1.100" /><path d="M18 6V27M10 19V27M1 19H27M18 12.500H27" stroke={B} strokeWidth="1.200" /><Rc d={[.7, .7, 26.600, 26.600]} f="none" sw={1.400} /><path d="M.7 6H27.300" stroke={K} /></>,
  <text x="12.200" y="22.500" textAnchor="middle" fontSize="24" fontWeight="700" fill="#2388c7" fontFamily="Open Sans" textLength="14" lengthAdjust="spacingAndGlyphs">R</text>,

  <text x="-1.500" y="19.500" fontSize="24.500" fontWeight="700" fill="#2388c7" fontFamily="Open Sans" textLength="29" lengthAdjust="spacingAndGlyphs">Py</text>,
  <>{axis}<path d="M1 5.700H19" stroke={B} strokeWidth="1.600" /><circle cx="22.300" cy="5.700" r="3.200" fill={L} stroke={B} strokeWidth="1.400" /><path d="M1 13H14.500M1 19.200H8" stroke={G} strokeWidth="1.400" /><circle cx="16.200" cy="13" r="1.800" fill={S} stroke={G} /><circle cx="10.200" cy="19.200" r="1.800" fill={S} stroke={G} /></>,
  <><path d="M10 13H18M17.500 4H15V22.500H17.500" stroke={K} strokeWidth="1.400" /><Rc d={[.7, 9.700, 10, 6.500]} f={L} s={B} /><Rc d={[17.300, 1, 10, 6.500]} f={L} s={B} /><Rc d={[17.300, 9.700, 10, 6.500]} f={L} s={B} /><Rc d={[17.300, 18.700, 10, 6.500]} f={L} s={B} /></>,
  <path d="M.7 2.500H27.300V19H12L5.700 26V19H.7Z" fill={W} stroke={B} strokeWidth="1.400" />,
  <><path d="M4 .7H15.500L24.500 9V26.500H4Z" fill={W} /><path d="M4 6V1H15.500L24.500 9V26.500H4V14M15 1V9H24.500" stroke={K} strokeWidth="1.400" /><circle cx="5" cy="10.500" r="2.800" fill={L} stroke={B} strokeWidth="1.300" /><path d="M11 13.300H20M8 17.500H17" stroke="#1c84cc" strokeWidth="1.300" /></>,
  <><path d="M6.500 3H.8V7.500Q1 13.500 8 13.500M21.500 3H27.200V7.500Q27 13.500 20 13.500" fill={W} stroke={K} strokeWidth="1.400" /><path d="M6.500 3H21.500V12Q21 18 16.500 18.500V23H11.500V18.500Q7 18 6.500 12Z" fill={W} stroke={K} strokeWidth="1.400" /><Rc d={[6.700, .7, 14.600, 3]} f={L} s={B} /><Rc d={[6.700, 23.700, 14.600, 3]} f={L} s={B} /></>,

  <><path d="M2.700 .7H16L24.300 9V28.500H2.700Z" fill={W} stroke={K} strokeWidth="1.500" /><path d="M16 .7V8.500H24.300" stroke={K} strokeWidth="1.300" /><path d="M8 17V26M14 21V26M19.500 13V26" stroke={K} strokeWidth="3.200" /></>,
  <><Rc d={[.7, 5, 26.600, 20]} f={W} sw={1.400} /><text x="15" y="19" textAnchor="middle" fontSize="12.500" fill="#1c84cc" textLength="19" fontFamily="Open Sans">123</text><path d="M4 21H25" stroke={G} />{bolt}</>,
  <><Rc d={[14.500, 1.700, 11, 10]} f={W} s={G} /><Rc d={[1, 15.700, 11, 10.500]} f={W} s={G} /><path d="M12.500 8V13.500H7Z" fill={B} />{bolt}<path d="M13 14H29V19L25 29H17Z" fill="#f3f2f1" />{funnel}</>,
  <><Rc d={[1.500, 1.200, 25.800, 26]} f={L} s={B} sw={1.500} /><path d="M3 25.500V18L9 13V3H19Q21 5 18 7Q14 9 14 12Q13 15 11 16Q9 18 10 20Q8 22 8.500 25.500Z" fill="#b9dcf5" /><path d="M20 2Q21.500 6 18 8Q15.500 10 17 12Q14 14 12.500 16Q10 18 11 20.500Q10.500 23 10 26.500H18L20 20L22 17Q24 15 26.500 13V10Q22 12 21 14Q18 17 17.500 20L15 22" fill="#f3f2f1" stroke={B} strokeWidth="1.100" /><path d="M-1 0H9V14L4 17L-1 14Z" fill="#f3f2f1" /><path d="M-1 5Q-1 0 4 0T9 5V10L4 16L-1 10Z" fill="#db6c00" /><circle cx="4" cy="5.500" r="2" fill="#fff" /><circle cx="23.700" cy="24.500" r="5.600" fill="#f3f2f1" /><circle cx="23.700" cy="24.500" r="4.500" fill="#db6c00" /><circle cx="27" cy="17" r="3.400" fill="#f3f2f1" /><circle cx="27" cy="17" r="2.300" fill="#db6c00" /></>,
  <path d="M10 2.500H18L27 13Q27.600 14 27 15L18 25.500H10L1 15Q.4 14 1 13ZM15.500 3L11.500 8Q10.500 9.500 11.500 10.700L22 21M15.500 25L11.500 20Q10.500 18.500 11.500 17.300L22 7" stroke="#8f2c99" strokeWidth="1.400" strokeLinejoin="round" fill={W} />,
  <path d="M1 2.500H19.500L27.300 14L18 25H1L10 14ZM10 14L19.500 2.500M10 25L22 8M3 23L20 4.500" stroke="#118dff" strokeWidth="1.400" strokeLinejoin="round" fill="#fff" />,
];

const label = 'text-[17.5px] leading-[24px] tracking-[-0.17px] text-[#323130] whitespace-nowrap';

function Visualizations() {
  return (
    <section className="flex w-[271px] shrink-0 flex-col border-l border-[#dcdad8] bg-[#f3f2f1]">
      <div className="flex h-[57px] items-center justify-between pl-[12px] pr-[11px]">
        <h2 className="text-[22px] font-semibold leading-[28px] tracking-[0.17px] text-[#252423]">Visualizations</h2>
        <DoubleChevron />
      </div>
      <div className="-mt-[1px] ml-[12px] text-[17.5px] font-medium leading-[24px] tracking-[0px] text-[#252423]">Build visual</div>
      <div className="mt-[6px] flex pl-[12px]">
        <div className="flex size-[48px] items-center justify-center rounded-[3px] bg-[#d2d0ce]">
          <Ic vb="1391 326 48 48" w={48} h={48}>
            <path d="M1397 333H1426" stroke="#252423" strokeWidth="1.700" />
            <rect x="1398" y="340" width="34" height="10.500" fill={GREEN} stroke="#252423" strokeWidth="1.700" strokeDasharray="3.500 1.800" />
            <rect x="1398" y="356" width="34" height="10.500" fill={GREEN} stroke="#252423" strokeWidth="1.700" strokeDasharray="3.500 1.800" />
          </Ic>
        </div>
        <Ic vb="1494 326 40 48" w={40} h={48} className="ml-[55px]">
          <path d="M1502 367.500H1496.500V332.500H1512L1522.500 343.500V347M1511.500 333V344H1522" stroke="#252423" strokeWidth="1.500" />
          <path d="M1504 365.500Q1508 366 1509.500 361Q1513 357.500 1517.500 361.500Q1519.500 366 1514 367Q1508 368.500 1504 365.500ZM1513 359L1526 348Q1533 343.500 1531 347.500L1518.500 363M1516 355.500L1520.500 359.500" stroke="#252423" strokeWidth="1.500" />
        </Ic>
      </div>
      <Ic vb="1379 374 270 21" w={270} h={21}>
        <path d="M1379 392.700H1403L1415 381.500L1427 392.700H1649" stroke="#979593" strokeWidth="1.500" />
      </Ic>
      <div className="ml-[16px] mt-[15px] grid w-[252px] grid-cols-6 gap-y-[14px]">
        {visuals.map((v, i) => (
          <svg key={i} width="28" height="28" viewBox="0 0 28 28" fill="none" className="block overflow-visible">
            {v}
          </svg>
        ))}
      </div>
      <Ic vb="0 0 22 4" w={22} h={4} className="ml-[19px] mt-[23px]">
        <path d="M0 2H3M9 2H12M18 2H21" stroke="#252423" strokeWidth="2.600" />
      </Ic>
      <div className="mt-[28px] h-px bg-[#dcdad8]" />
      <div className={`${label} ml-[18px] mt-[12px]`}>Values</div>
      <div className={`${label} ml-[6px] mt-[9px] flex h-[42px] w-[255px] items-center rounded-[3px] border border-dashed border-[#c8c6c4] bg-white pb-[3px] pl-[15px]`}>Add data fields here</div>
      <div className="ml-[18px] mt-[15px] text-[17.5px] font-semibold leading-[24px] tracking-[-0.27px] text-[#484644]">Drill through</div>
      <div className="ml-[18px] mt-[14px] flex h-[24px] w-[219px] items-center justify-between">
        <span className={label}>Cross-report</span>
        <span className="flex h-[24px] w-[48px] items-center rounded-full border border-[#8a8886] bg-white pl-[6px] text-[13px] tracking-[-0.2px] text-[#605e5c]">
          <i className="mr-[4px] block size-[12px] rounded-full bg-[#605e5c]" />
          <span className="mt-[2px]">Off</span>
        </span>
      </div>
      <div className="ml-[18px] mt-[16px] flex h-[24px] w-[219px] items-center justify-between">
        <span className={label}>Keep all filters</span>
        <span className="flex h-[24px] w-[48px] items-center justify-between rounded-full bg-[#117865] px-[7px] text-[13px] tracking-[-0.2px] text-white">
          <span className="mt-[2px]">On</span>
          <i className="block size-[12px] rounded-full bg-white" />
        </span>
      </div>
      <div className="ml-[6px] mt-[15px] flex h-[38px] w-[255px] items-center whitespace-nowrap rounded-[3px] border border-dashed border-[#c8c6c4] bg-white pl-[12px] text-[17.5px] leading-[24px] tracking-[-0.08px] text-[#323130]">Add drill-through fields here</div>
    </section>
  );
}

/* ---------- Data pane ---------- */

type Row = { t: string; depth: number; open?: boolean; closed?: boolean; icon?: 'table' | 'cal' | 'tree' | 'sum'; box?: boolean };

const rows: Row[] = [
  { t: 'apps', depth: 0, open: true, icon: 'table' },
  { t: 'description', depth: 1, box: true },
  { t: 'developer', depth: 1, box: true },
  { t: 'id', depth: 1, box: true },
  { t: 'lastmod', depth: 1, box: true, open: true, icon: 'cal' },
  { t: 'Date Hierarc...', depth: 2, box: true, open: true, icon: 'tree' },
  { t: 'Year', depth: 3, box: true },
  { t: 'Quarter', depth: 3, box: true },
  { t: 'Month', depth: 3, box: true },
  { t: 'Day', depth: 3, box: true },
  { t: 'pricing_hint', depth: 1, box: true },
  { t: 'rating', depth: 1, box: true, icon: 'sum' },
  { t: 'reviews_count', depth: 1, box: true, icon: 'sum' },
  { t: 'tagline', depth: 1, box: true },
  { t: 'apps_categories', depth: 0, closed: true, icon: 'table' },
  { t: 'categories', depth: 0, closed: true, icon: 'table' },
  { t: 'reviews', depth: 0, closed: true, icon: 'table' },
];

const indent = ['pl-[19px]', 'pl-[41px]', 'pl-[64px]', 'pl-[86px]'];

function RowIcon({ icon }: { icon: Row['icon'] }) {
  return (
    <svg width="20" height="24" viewBox="0 0 20 24" fill="none" className="block shrink-0" stroke="#252423" strokeWidth="1.500">
      {icon === 'table' && (
        <>
          <rect x="1.800" y="3.800" width="16.500" height="16.500" rx="3" />
          <path d="M7 4V20M13 4V20M2 9H18M2 15H18" />
        </>
      )}
      {icon === 'cal' && (
        <>
          <rect x="1.800" y="3.800" width="16.500" height="16.500" rx="3" />
          <path d="M2 8.500H18" />
          <path d="M9.200 12.500H10.800M13.200 12.500H14.800M5.200 16H6.800M5.200 12.500H6.800M9.200 16H10.800" strokeWidth="1.700" />
        </>
      )}
      {icon === 'tree' && <path d="M3 1.800H7.500V6.300H3ZM5 6.500V20H10.500M5 13H10.500M10.500 10.500H15.200V15H10.500ZM10.500 18H15.200V22.500H10.500Z" strokeWidth="1.300" />}
      {icon === 'sum' && <path d="M18 3.800H3L11 12L3 20.200H18" />}
    </svg>
  );
}

function DataPane() {
  return (
    <section className="w-[271px] shrink-0 border-l border-[#dcdad8] bg-[#f3f2f1]">
      <div className="flex h-[57px] items-center justify-between pl-[12px] pr-[11px]">
        <h2 className="text-[22px] font-semibold leading-[28px] tracking-[0.1px] text-[#252423]">Data</h2>
        <DoubleChevron />
      </div>
      <div className="ml-[6px] mt-[11px] flex h-[36px] w-[258px] items-center rounded-[5px] border border-b-[1.5px] border-[#d1d1d1] border-b-[#616161] bg-white">
        <Ic vb="0 0 23 23" w={23} h={23} className="-mt-[1px] ml-[18px]">
          <circle cx="9.500" cy="9.500" r="8" stroke="#616161" strokeWidth="1.500" />
          <path d="M15.500 15.500L22 22" stroke="#616161" strokeWidth="1.600" />
        </Ic>
        <span className="ml-[8px] mt-[4px] text-[20px] leading-[26px] tracking-[-0.4px] text-[#707070]">Search</span>
      </div>
      <div className="mt-[14px]">
        {rows.map((r) => (
          <div key={r.t} className={`flex h-[36px] items-center ${indent[r.depth]}`}>
            <span className={`flex shrink-0 items-center ${r.box ? 'w-[25px]' : 'w-[24px]'}`}>
              {r.open && (
                <Ic vb="0 0 20 12" w={20} h={12}>
                  <path d="M1.500 1.500L10 10L18.500 1.500" stroke="#3b3a39" strokeWidth="1.300" />
                </Ic>
              )}
              {r.closed && (
                <Ic vb="0 0 12 20" w={12} h={20} className="ml-[4px]">
                  <path d="M1.500 1.500L10 10L1.500 18.500" stroke="#3b3a39" strokeWidth="1.300" />
                </Ic>
              )}
            </span>
            {r.box && <span className="mr-[11px] block size-[18px] shrink-0 rounded-[3px] border border-[#8a8886]" />}
            <RowIcon icon={r.icon} />
            <span className={`${r.box ? 'ml-[8px]' : 'ml-[7px]'} mt-[1px] whitespace-nowrap text-[17.500px] leading-[24px] tracking-[-0.23px] text-[#3b3a39]`}>{r.t}</span>
          </div>
        ))}
      </div>
    </section>
  );
}

/* ---------- Status bar ---------- */

function StatusBar() {
  return (
    <footer className="flex h-[36px] shrink-0 flex-col border-t border-[#dcdad8] bg-[#f3f2f1]">
      <div className="flex h-[33px] items-center text-[#484644]">
        <span className="ml-[6px] mt-[2px] w-[1594px] text-[17.500px] leading-[24px] tracking-[-0.05px]">Page 1 of 1</span>
        <Ic vb="1600 1045 192 33" w={192} h={33}>
          <path d="M1603 1062.700H1609.500M1774 1062H1786M1780 1056.500V1067.500" stroke="#605e5c" strokeWidth="2" />
          <path d="M1616 1062.500H1766" stroke="#605e5c" strokeWidth="1.200" />
          <path d="M1691 1058.500V1066" stroke="#605e5c" strokeWidth="2" />
          <rect x="1648" y="1054" width="6" height="17" fill="#605e5c" />
        </Ic>
        <span className="-mt-[1px] ml-[14px] w-[62px] text-[17.500px] leading-[24px] tracking-[-0.4px] text-[#605e5c]">52%</span>
        <Ic vb="1868 1053 26 20" w={26} h={20} className="mt-[4px]">
          <path d="M1869.700 1054.700H1892.300V1071.300H1869.700Z" stroke="#605e5c" strokeWidth="1.500" />
          <path d="M1873 1061V1058H1876.500M1885.500 1058H1889V1061M1889 1065V1068H1885.500M1876.500 1068H1873V1065" stroke="#605e5c" strokeWidth="1.500" />
        </Ic>
      </div>
      <div className="flex h-[2px]">
        <i className="w-[72px] bg-[#323130]" />
        <i className="w-[516px] bg-[#bdbcbb]" />
        <i className="flex-1 bg-[#403f41]" />
      </div>
    </footer>
  );
}

export default function App() {
  return (
    <div className="relative flex h-[1080px] w-[1920px] flex-col overflow-hidden bg-white font-['Open_Sans','Noto_Sans',sans-serif]">
      <TitleBar />
      <RibbonTabs />
      <Ribbon />
      <div className="flex h-[804px]">
        <LeftRail />
        <div className="flex w-[1317px] flex-col">
          <div className="flex h-[751px]">
            <Canvas />
            <Filters />
          </div>
          <PageTabs />
        </div>
        <Visualizations />
        <DataPane />
      </div>
      <StatusBar />
      <div className="absolute left-[910px] top-[478px] flex h-[31px] w-[236px] items-center bg-[#f0f5fc]/30 pl-[41px] pt-[3px]">
        <span className="whitespace-nowrap text-[17.5px] leading-[24px] tracking-[-0.45px] text-[#f1f2f5]">Full-screen Snip</span>
      </div>
    </div>
  );
}
